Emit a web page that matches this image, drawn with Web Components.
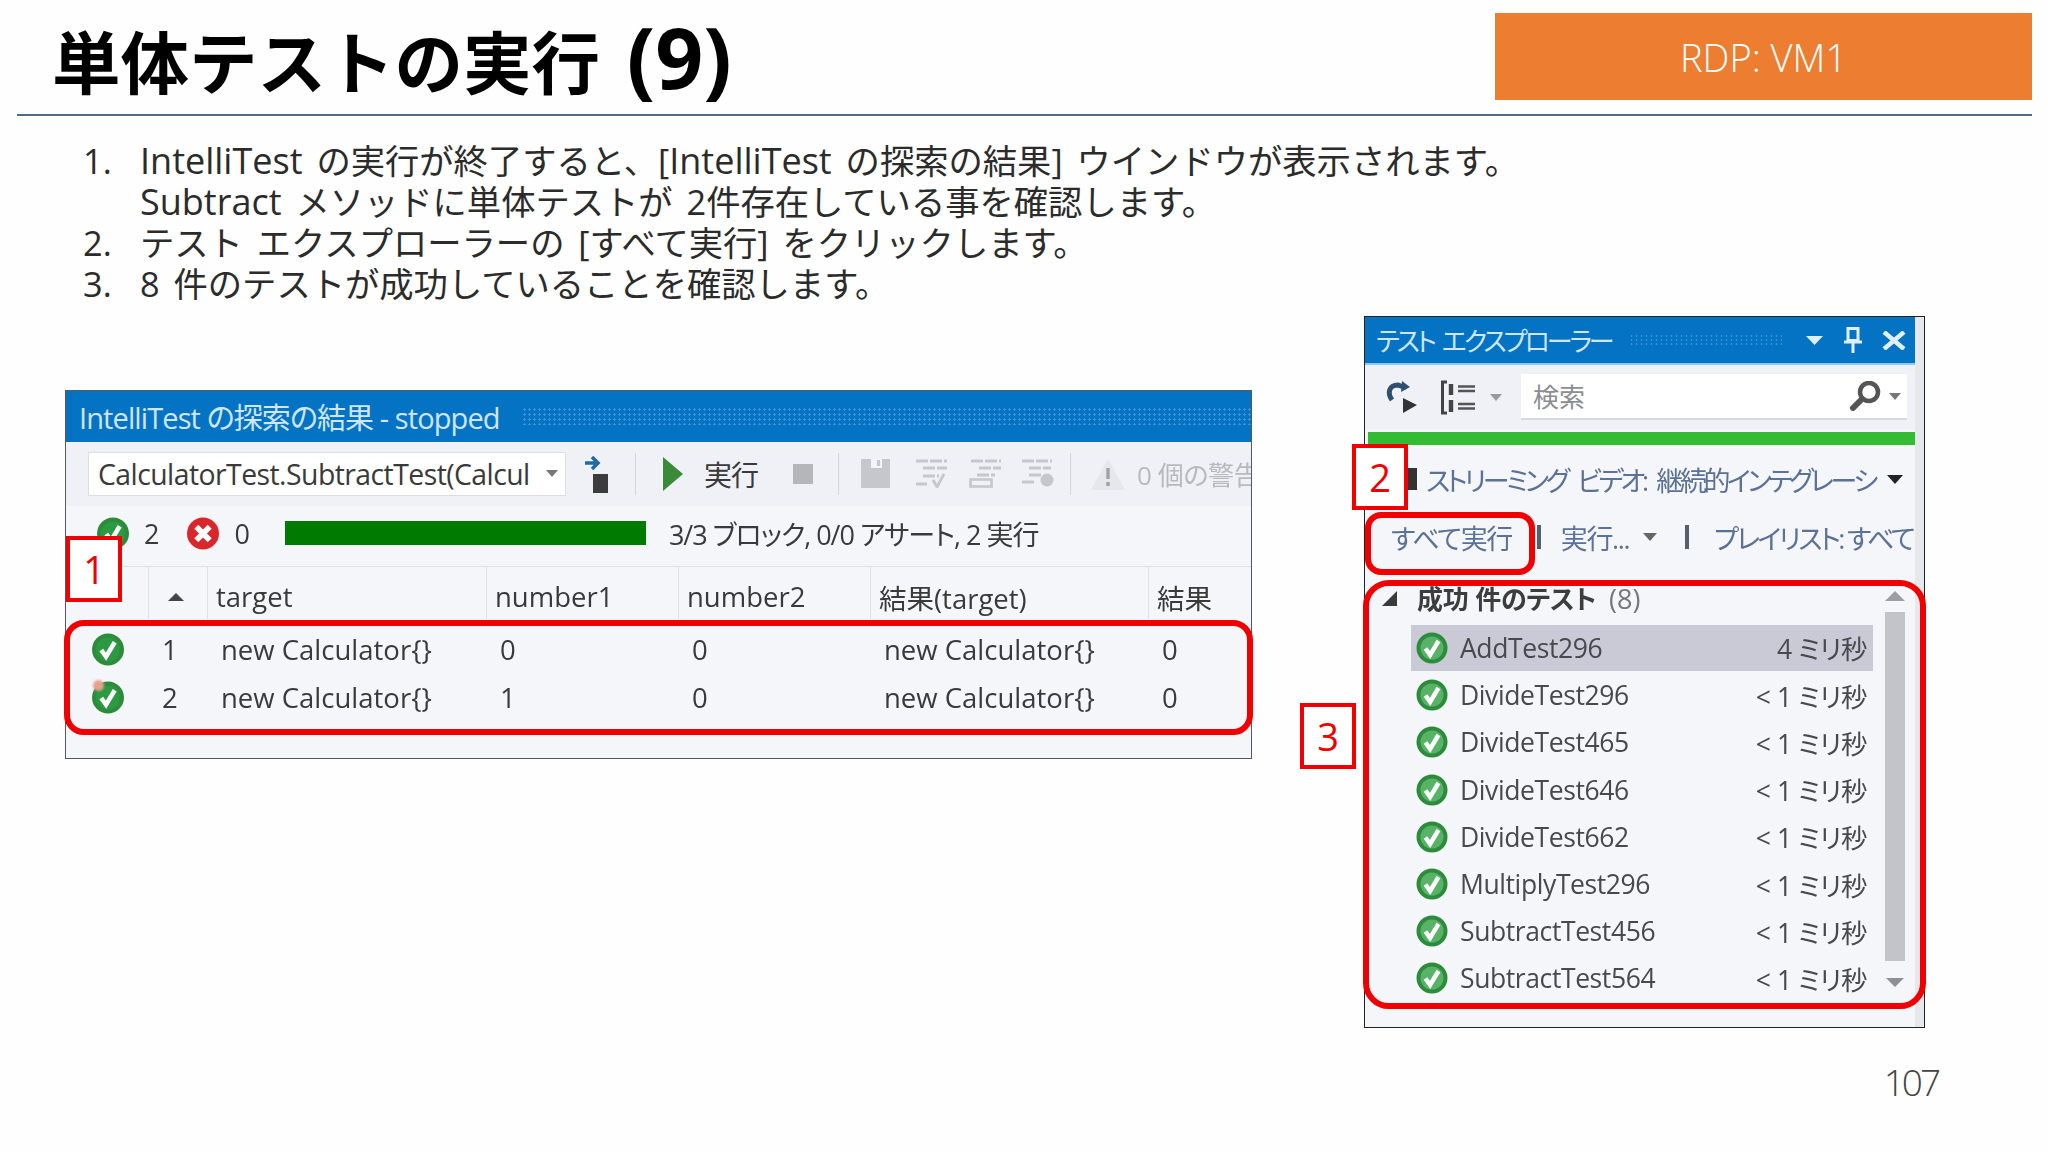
<!doctype html>
<html lang="ja">
<head>
<meta charset="utf-8">
<title>単体テストの実行 (9)</title>
<style>
  html, body { margin: 0; padding: 0; }
  body {
    width: 2048px;
    height: 1152px;
    overflow: hidden;
    background: #fefefe;
    font-family: "Open Sans", "Noto Sans CJK JP", sans-serif;
    color: #222;
    font-feature-settings: "palt";
  }
  .shots {
    display: flex;
    align-items: flex-start;
    padding-left: 65px;
    margin-top: 12px;
  }
  step-list .en { font-size: 36px; }
</style>
</head>
<body>
<slide-header>
  <span slot="title">単体テストの実行 <span style="font-size:84px;line-height:1;margin-left:9px">(9)</span></span>
  <span slot="badge">RDP: VM1</span>
</slide-header>

<step-list>
  <li><span class="en">IntelliTest</span> の実行が終了すると、[<span class="en">IntelliTest</span> の探索の結果] ウインドウが表示されます。<br><span class="en">Subtract</span> メソッドに単体テストが 2件存在している事を確認します。</li>
  <li>テスト エクスプローラーの [すべて実行] をクリックします。</li>
  <li>8 件のテストが成功していることを確認します。</li>
</step-list>

<div class="shots">
  <results-panel></results-panel>
  <explorer-panel></explorer-panel>
</div>

<page-number>107</page-number>

<script>
class StatusIcon extends HTMLElement {
  constructor() {
    super();
    const shadowRoot = this.attachShadow({ mode: "open" });
    const kind = this.getAttribute("kind");
    const inner = kind === "dark" ? "#2c9a43" : "#58b368";
    shadowRoot.innerHTML = `
      <style>
        :host { display: inline-block; width: 34px; height: 33px; flex: none; }
        svg { display: block; }
      </style>
      ${kind === "fail" ? `
      <svg viewBox="0 0 32 32" width="100%" height="100%">
        <circle cx="16" cy="16" r="15.5" fill="#d8262c"/>
        <path d="M9.5 9.5l13 13M22.5 9.5l-13 13" fill="none" stroke="#fff" stroke-width="5.5"/>
      </svg>` : `
      <svg viewBox="0 0 32 32" width="100%" height="100%">
        <circle cx="16" cy="16" r="15.5" fill="#2d8c3c"/>
        <circle cx="16" cy="16" r="11.5" fill="${inner}"/>
        <path d="M9.5 16.5l4.6 6.5 8.4-14" fill="none" stroke="#fff" stroke-width="4.4"/>
      </svg>`}`;
  }
}
customElements.define("status-icon", StatusIcon);

const headerTemplate = document.createElement("template");
headerTemplate.innerHTML = `
  <style>
    :host {
      display: flex;
      justify-content: space-between;
      height: 114px;
      margin: 0 16px 0 17px;
      border-bottom: 2px solid #4d6a88;
    }
    .title {
      margin: 15px 0 0 35px;
      font-size: 68.5px;
      line-height: 80px;
      font-weight: 700;
      color: #000;
      font-feature-settings: normal;
      white-space: nowrap;
    }
    .badge {
      width: 537px;
      height: 87px;
      margin-top: 13px;
      display: flex;
      align-items: center;
      justify-content: center;
      background: #ed7d31;
      color: #fff;
      font-size: 38px;
      font-weight: 300;
    }
  </style>
  <div class="title"><slot name="title"></slot></div>
  <div class="badge"><slot name="badge"></slot></div>
`;
class SlideHeader extends HTMLElement {
  constructor() {
    super();
    this.attachShadow({ mode: "open" }).append(headerTemplate.content.cloneNode(true));
  }
}
customElements.define("slide-header", SlideHeader);

const stepsTemplate = document.createElement("template");
stepsTemplate.innerHTML = `
  <style>
    :host {
      display: block;
      counter-reset: step;
      margin: 24px 0 0 140px;
      font-size: 34.3px;
      line-height: 41px;
      color: #2b2b2b;
      font-weight: 400;
      font-feature-settings: normal;
      word-spacing: 5px;
    }
    ::slotted(li) {
      display: block;
      position: relative;
    }
  </style>
  <slot></slot>
`;
class StepList extends HTMLElement {
  constructor() {
    super();
    this.attachShadow({ mode: "open" }).append(stepsTemplate.content.cloneNode(true));
  }
  connectedCallback() {
    // list numbers hang in the left gutter
    const mark = document.createElement("style");
    mark.textContent = `
      step-list li { counter-increment: step; }
      step-list li::before {
        content: counter(step) ".";
        position: absolute;
        left: -57px;
      }`;
    document.head.append(mark);
  }
}
customElements.define("step-list", StepList);

const resultRowTemplate = document.createElement("template");
resultRowTemplate.innerHTML = `
  <style>
    :host {
      display: grid;
      grid-template-columns: 83px 59px 279px 192px 192px 278px 1fr;
      align-items: center;
      height: 48px;
      font-size: 27.5px;
      color: #3a3a3a;
    }
    ::slotted(.icon) { justify-self: start; margin-left: 25px; }
    ::slotted(.num) { padding-left: 13px; }
    ::slotted(.val) { padding-left: 13px; }
  </style>
  <slot></slot>
`;
class ResultRow extends HTMLElement {
  constructor() {
    super();
    this.attachShadow({ mode: "open" }).append(resultRowTemplate.content.cloneNode(true));
  }
}
customElements.define("result-row", ResultRow);

const resultsTemplate = document.createElement("template");
resultsTemplate.innerHTML = `
  <style>
    :host {
      display: block;
      position: relative;
      width: 1187px;
      height: 369px;
      margin: 73.6px 0 0 0;
      box-sizing: border-box;
      border: 1.5px solid #55585c;
      background: #f5f6f9;
      flex: none;
    }
    .shot { filter: blur(0.6px); overflow: hidden; height: 100%; }
    .bar {
      display: flex;
      align-items: center;
      height: 51px;
      padding-left: 13px;
      gap: 22px;
      background: #0573c4;
      color: #cfe6f8;
      font-size: 29px;
      letter-spacing: -0.9px;
      white-space: nowrap;
    }
    .grip {
      flex: 1;
      height: 18px;
      background-image: radial-gradient(#3c93d3 1px, transparent 1.2px);
      background-size: 5px 5px;
    }
    .tools {
      display: flex;
      align-items: center;
      height: 64px;
      background: #eff1f6;
      white-space: nowrap;
      font-size: 28px;
      color: #3a3a3a;
    }
    .combo {
      display: flex;
      align-items: center;
      flex: none;
      box-sizing: border-box;
      width: 478px;
      height: 44px;
      margin-left: 22px;
      padding: 0 0 0 9px;
      background: #fff;
      border: 1px solid #dcdee4;
      font-size: 28.4px;
      letter-spacing: -0.55px;
    }
    .down { width: 0; height: 0; margin-left: 16px; border: 6px solid transparent; border-top: 7px solid #777; border-bottom: 0; }
    .sep { width: 1px; height: 42px; background: #d4d6dc; flex: none; }
    .tools svg { flex: none; display: block; }
    .off { color: #b7b9bd; font-size: 26px; letter-spacing: -0.4px; }
    .status {
      display: flex;
      align-items: center;
      height: 55px;
      margin-bottom: 5px;
      font-size: 27px;
      color: #3a3a3a;
      white-space: nowrap;
    }
    .progress { width: 361px; height: 24px; background: #007a00; flex: none; }
    .status .run { letter-spacing: -1px; }
    .head {
      display: grid;
      grid-template-columns: 83px 59px 279px 192px 192px 278px 1fr;
      box-sizing: border-box;
      height: 53px;
      border-top: 1px solid #dfe0e5;
      font-size: 27.5px;
      color: #3a3a3a;
    }
    .head > div {
      display: flex;
      align-items: center;
      padding: 8px 0 0 8px;
      border-right: 1px solid #dfe0e5;
      box-sizing: border-box;
    }
    .head > div:last-child { border-right: 0; }
    .sort { width: 0; height: 0; margin-left: 11px; border: 8px solid transparent; border-bottom: 8px solid #444; border-top: 0; }
    .rows { padding-top: 7px; }
    .ring {
      position: absolute;
      left: -2px;
      top: 229px;
      width: 1189px;
      height: 115px;
      box-sizing: border-box;
      border: 6px solid #f00000;
      border-radius: 20px;
    }
    .tag { position: absolute; left: 0; top: 145px; }
    .stain {
      position: absolute;
      left: 27px;
      top: 289px;
      width: 11px;
      height: 11px;
      border-radius: 50%;
      background: #e7a08c;
      filter: blur(1px);
    }
  </style>
  <div class="shot">
    <div class="bar"><span>IntelliTest の探索の結果 - stopped</span><span class="grip"></span></div>
    <div class="tools">
      <div class="combo"><span>CalculatorTest.SubtractTest(Calcul</span><span class="down"></span></div>
      <svg style="margin-left:17px" width="26" height="40" viewBox="0 0 26 40">
        <path d="M2 9h12M9 3l6 6-6 6" fill="none" stroke="#1f6aa5" stroke-width="3.5"/>
        <rect x="10" y="20" width="15" height="19" fill="#3c3c3c"/>
      </svg>
      <span class="sep" style="margin-left:26px"></span>
      <svg style="margin-left:27px" width="20" height="34" viewBox="0 0 20 34"><path d="M0 0l20 17L0 34z" fill="#3a8a3a"/></svg>
      <span style="margin-left:21px;letter-spacing:-1px">実行</span>
      <span style="width:20px;height:20px;margin-left:35px;background:#b4b6ba;flex:none"></span>
      <span class="sep" style="margin-left:25px"></span>
      <svg style="margin-left:22px" width="29" height="29" viewBox="0 0 29 29">
        <path d="M0 0h29v29H0z" fill="#c6c7cc"/>
        <path d="M10 0h11v9H10z" fill="#f3f4f8"/>
        <path d="M16 1h3v6h-3z" fill="#c6c7cc"/>
      </svg>
      <svg style="margin-left:25px" width="33" height="29" viewBox="0 0 33 29">
        <path d="M1 2h31M8 9h24M8 17h16M1 25h11" fill="none" stroke="#c6c7cc" stroke-width="2.8" stroke-dasharray="12 2"/>
        <path d="M18 21l4 7 7-13" fill="none" stroke="#c6c7cc" stroke-width="2.8"/>
      </svg>
      <svg style="margin-left:21px" width="32" height="29" viewBox="0 0 32 29">
        <path d="M2 2h30M10 9h22M8 16h18" fill="none" stroke="#c6c7cc" stroke-width="2.8" stroke-dasharray="12 2"/>
        <rect x="1.5" y="20.5" width="21" height="7" fill="none" stroke="#c6c7cc" stroke-width="2.6"/>
      </svg>
      <svg style="margin-left:20px" width="34" height="29" viewBox="0 0 34 29">
        <path d="M1 2h30M8 9h22M8 16h14M1 23h14" fill="none" stroke="#c6c7cc" stroke-width="2.8" stroke-dasharray="12 2"/>
        <circle cx="26" cy="21" r="6.5" fill="#c6c7cc"/>
      </svg>
      <span class="sep" style="margin-left:15px"></span>
      <svg style="margin-left:20px" width="34" height="32" viewBox="0 0 34 32"><path d="M17 1l17 31H0z" fill="#e6e7ea"/><path d="M17 10v11M17 24v4" stroke="#a0a2a6" stroke-width="3.4"/></svg>
      <span class="off" style="margin-left:12px">0 個の警告</span>
    </div>
    <div class="status">
      <status-icon kind="dark" style="margin-left:30px"></status-icon>
      <span style="margin-left:14px">2</span>
      <status-icon kind="fail" style="margin-left:27px"></status-icon>
      <span style="margin-left:14px">0</span>
      <span class="progress" style="margin-left:35px"></span>
      <span class="run" style="margin-left:23px">3/3 ブロック, 0/0 アサート, 2 実行</span>
    </div>
    <div class="head">
      <div></div><div><span class="sort"></span></div>
      <div>target</div><div>number1</div><div>number2</div><div>結果(target)</div><div>結果</div>
    </div>
    <div class="rows">
      <result-row>
        <status-icon kind="dark" class="icon"></status-icon><span class="num">1</span><span class="val">new Calculator{}</span>
        <span class="val">0</span><span class="val">0</span><span class="val">new Calculator{}</span><span class="val">0</span>
      </result-row>
      <result-row>
        <status-icon kind="dark" class="icon"></status-icon><span class="num">2</span><span class="val">new Calculator{}</span>
        <span class="val">1</span><span class="val">0</span><span class="val">new Calculator{}</span><span class="val">0</span>
      </result-row>
    </div>
  </div>
  <span class="stain"></span>
  <span class="ring"></span>
  <callout-tag class="tag">1</callout-tag>
`;
class ResultsPanel extends HTMLElement {
  constructor() {
    super();
    this.attachShadow({ mode: "open" }).append(resultsTemplate.content.cloneNode(true));
  }
}
customElements.define("results-panel", ResultsPanel);

const testRowTemplate = document.createElement("template");
testRowTemplate.innerHTML = `
  <style>
    :host {
      display: flex;
      align-items: center;
      box-sizing: border-box;
      width: 462px;
      height: 47.2px;
      padding: 0 6px 0 5px;
      font-size: 26.5px;
      color: #47494d;
      white-space: nowrap;
      letter-spacing: -0.4px;
    }
    :host([selected]) { background: #c9cad6; height: 46px; margin-bottom: 1.2px; }
    status-icon { width: 32px; height: 32px; margin-right: 12px; }
    .name { flex: 1; }
  </style>
  <status-icon></status-icon>
  <span class="name"><slot></slot></span>
  <span class="time"><slot name="time"></slot></span>
`;
class TestRow extends HTMLElement {
  constructor() {
    super();
    this.attachShadow({ mode: "open" }).append(testRowTemplate.content.cloneNode(true));
  }
}
customElements.define("test-row", TestRow);

const explorerTemplate = document.createElement("template");
explorerTemplate.innerHTML = `
  <style>
    :host {
      display: block;
      position: relative;
      width: 561px;
      height: 712px;
      margin-left: 112px;
      box-sizing: border-box;
      border: 1.5px solid #222;
      background: #f5f6f9;
      flex: none;
    }
    .shot { filter: blur(0.6px); overflow: hidden; height: 100%; width: 550px; border-right: 9px solid #e7e8ec; box-sizing: content-box; }
    .bar {
      display: flex;
      align-items: center;
      box-sizing: border-box;
      height: 48px;
      padding-left: 11px;
      border-bottom: 2px solid #8fcbee;
      background: #0573c4;
      color: #cfe6f8;
      font-size: 26px;
      white-space: nowrap;
      letter-spacing: -3px;
      word-spacing: 4px;
    }
    .grip {
      width: 153px;
      height: 12px;
      margin-left: 17px;
      flex: none;
      background-image: radial-gradient(#3c93d3 1px, transparent 1.2px);
      background-size: 5px 4px;
    }
    .bar svg { display: block; flex: none; }
    .tools {
      display: flex;
      align-items: center;
      height: 64px;
      background: #eff1f6;
    }
    .tools svg { display: block; flex: none; }
    .search {
      display: flex;
      align-items: center;
      justify-content: space-between;
      flex: none;
      box-sizing: border-box;
      width: 386px;
      height: 46px;
      padding: 0 6px 0 12px;
      background: #fff;
      border-bottom: 2px solid #d8d9de;
      color: #8b8d91;
      font-size: 26px;
    }
    .down { display: inline-block; width: 0; height: 0; border: 6px solid transparent; border-top: 7px solid #777; border-bottom: 0; flex: none; }
    .search .ico { display: flex; align-items: center; gap: 8px; }
    .meter { height: 13px; margin: 3px -1px 0 3px; background: #33bb33; }
    .filter {
      display: flex;
      align-items: center;
      height: 58px;
      margin-top: 5px;
      padding-left: 46px;
      font-size: 27px;
      color: #5b7296;
      white-space: nowrap;
      letter-spacing: -3.4px;
      word-spacing: 7px;
      position: relative;
    }
    .filter .block { width: 10px; height: 22px; background: #333; margin-right: 9px; margin-left: -4px; flex: none; }
    .filter .down { border-width: 8px; border-top: 9px solid #222; margin-left: 12px; }
    .actions {
      display: flex;
      align-items: center;
      height: 58px;
      color: #5b7296;
      font-size: 27px;
      white-space: nowrap;
      letter-spacing: -1.4px;
    }
    .vr { width: 4px; height: 24px; background: #55606e; flex: none; }
    .group {
      display: flex;
      align-items: center;
      height: 50px;
      margin-top: 7px;
      font-size: 26px;
      color: #3d3d3d;
      white-space: nowrap;
    }
    .tri { width: 0; height: 0; border-style: solid; border-width: 0 0 15px 15px; border-color: transparent transparent #3a3a3a; margin-left: 17px; flex: none; }
    .body { position: relative; padding-left: 46px; padding-top: 1.5px; }
    .scroll {
      position: absolute;
      left: 520px;
      top: -37.5px;
      width: 20px;
      height: 394px;
      display: flex;
      flex-direction: column;
      align-items: center;
    }
    .thumb { width: 20px; height: 349px; margin: 11px 0 0; background: #c3c4ca; flex: none; }
    .up { width: 0; height: 0; border: 10px solid transparent; border-bottom: 10px solid #9d9ea4; border-top: 0; flex: none; margin-top: 5px; }
    .dn { width: 0; height: 0; border: 9px solid transparent; border-top: 9px solid #8e8f96; border-bottom: 0; flex: none; margin-top: 17px; }
    .tag2 { position: absolute; left: -13px; top: 127px; }
    .tag3 { position: absolute; left: -65px; top: 386px; }
    .ring { position: absolute; box-sizing: border-box; border: 6px solid #f00000; }
    .ring-a { left: 0; top: 194.5px; width: 170px; height: 63px; border-radius: 16px; }
    .ring-b { left: -2px; top: 263px; width: 563px; height: 429px; border-radius: 26px; }
  </style>
  <div class="shot">
    <div class="bar">
      <span>テスト エクスプローラー</span>
      <span class="grip"></span>
      <svg style="margin-left:24px" width="17" height="9" viewBox="0 0 17 9"><path d="M0 0h17L8.5 9z" fill="#dff0fb"/></svg>
      <svg style="margin-left:20px" width="20" height="26" viewBox="0 0 20 26"><path d="M5 1.5h10v12H5zM1 15h18M10 15v11" fill="none" stroke="#dff0fb" stroke-width="3"/></svg>
      <svg style="margin-left:19px" width="24" height="19" viewBox="0 0 24 19"><path d="M2 1l20 17M22 1L2 18" stroke="#dff0fb" stroke-width="4.5"/></svg>
    </div>
    <div class="tools">
      <svg style="margin-left:20px" width="32" height="32" viewBox="0 0 32 32">
        <path d="M7 19C2 12 4 4 13 4l8 3" fill="none" stroke="#2f4f6f" stroke-width="5"/>
        <path d="M17 0l8 6-9 5z" fill="#2f4f6f"/>
        <path d="M18 17l14 7-14 8z" fill="#333"/>
      </svg>
      <svg style="margin-left:24px" width="34" height="35" viewBox="0 0 34 35">
        <path d="M6 2H1.5v31H6" fill="none" stroke="#444" stroke-width="3"/>
        <path d="M10 4v11M10 20v12" stroke="#444" stroke-width="4.4"/>
        <path d="M17 6.5h17M17 11h17M17 24h17M17 28.5h17" stroke="#555" stroke-width="2.6"/>
      </svg>
      <span class="down" style="margin-left:15px;border-top-color:#999"></span>
      <div class="search" style="margin-left:19px">
        <span>検索</span>
        <span class="ico">
          <svg width="32" height="30" viewBox="0 0 32 30"><circle cx="20" cy="11" r="9" fill="none" stroke="#555" stroke-width="4.5"/><path d="M13 18L4 27" stroke="#555" stroke-width="6" stroke-linecap="round"/></svg>
          <span class="down"></span>
        </span>
      </div>
    </div>
    <div class="meter"></div>
    <div class="filter"><span class="block"></span><span>ストリーミング ビデオ: 継続的インテグレーシ</span><span class="down"></span></div>
    <div class="actions">
      <span style="margin-left:26px">すべて実行</span>
      <span class="vr" style="margin-left:25px"></span>
      <span style="margin-left:20px">実行...</span>
      <span class="down" style="margin-left:14px;border-width:7px;border-top:8px solid #666"></span>
      <span class="vr" style="margin-left:28px"></span>
      <span style="margin-left:25px;letter-spacing:-2.6px">プレイリスト: すべて</span>
    </div>
    <div class="group"><span class="tri"></span><b style="margin-left:20px;font-weight:700;letter-spacing:-0.2px">成功 件のテスト</b><span style="margin-left:13px;color:#777;font-size:27px">(8)</span></div>
    <div class="body">
      <div class="scroll"><span class="up"></span><span class="thumb"></span><span class="dn"></span></div>
      <slot></slot>
    </div>
  </div>
  <span class="ring ring-a"></span>
  <span class="ring ring-b"></span>
  <callout-tag class="tag2">2</callout-tag>
  <callout-tag class="tag3">3</callout-tag>
`;
class ExplorerPanel extends HTMLElement {
  constructor() {
    super();
    const shadowRoot = this.attachShadow({ mode: "open" });
    shadowRoot.append(explorerTemplate.content.cloneNode(true));
    const body = shadowRoot.querySelector(".body");
    const tests = [
      ["AddTest296", "4 ミリ秒"],
      ["DivideTest296", "< 1 ミリ秒"],
      ["DivideTest465", "< 1 ミリ秒"],
      ["DivideTest646", "< 1 ミリ秒"],
      ["DivideTest662", "< 1 ミリ秒"],
      ["MultiplyTest296", "< 1 ミリ秒"],
      ["SubtractTest456", "< 1 ミリ秒"],
      ["SubtractTest564", "< 1 ミリ秒"],
    ];
    tests.forEach(([name, time], i) => {
      const row = document.createElement("test-row");
      if (i === 0) row.setAttribute("selected", "");
      row.textContent = name;
      const t = document.createElement("span");
      t.slot = "time";
      t.textContent = time;
      row.append(t);
      body.append(row);
    });
  }
}
customElements.define("explorer-panel", ExplorerPanel);

class CalloutTag extends HTMLElement {
  constructor() {
    super();
    this.attachShadow({ mode: "open" }).innerHTML = `
      <style>
        :host {
          display: flex;
          align-items: center;
          justify-content: center;
          box-sizing: border-box;
          width: 56px;
          height: 66px;
          background: #fff;
          border: 4px solid #f00000;
          color: #f00000;
          font-size: 38px;
          font-weight: 400;
        }
      </style>
      <slot></slot>`;
  }
}
customElements.define("callout-tag", CalloutTag);

class PageNumber extends HTMLElement {
  constructor() {
    super();
    this.attachShadow({ mode: "open" }).innerHTML = `
      <style>
        :host {
          display: block;
          margin: 28px 110px 0 0;
          text-align: right;
          font-size: 37px;
          line-height: 52px;
          font-weight: 300;
          color: #444;
          letter-spacing: -3px;
        }
      </style>
      <slot></slot>`;
  }
}
customElements.define("page-number", PageNumber);
</script>
</body>
</html>
